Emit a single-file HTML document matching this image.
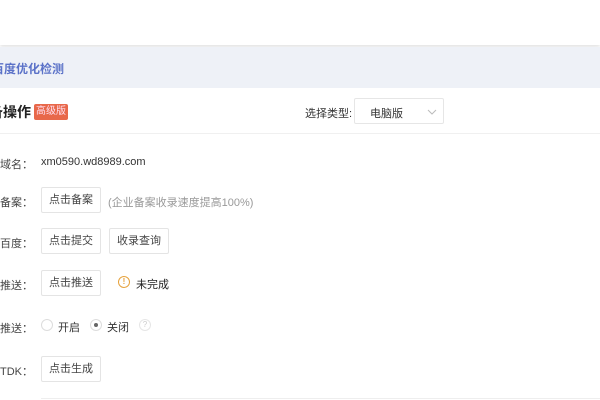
<!DOCTYPE html>
<html><head><meta charset="utf-8"><style>
body{margin:0;width:600px;height:400px;overflow:hidden;background:#fff;font-family:"Liberation Sans","Noto Sans CJK SC",sans-serif;font-size:11px;color:#333;position:relative}
.a{position:absolute;white-space:nowrap}
.top{position:absolute;left:0;top:0;width:600px;height:45px;background:#fff;box-shadow:0 2px 4px rgba(0,0,0,.12)}
.band{position:absolute;left:0;top:47px;width:600px;height:41px;background:#eef1f7}
.lbl{position:absolute;right:567px;text-align:right;color:#444;white-space:nowrap}
.btn{position:absolute;height:26px;width:60px;border:1px solid #e4e4e4;border-radius:2px;box-sizing:border-box;text-align:center;line-height:24px;color:#444;background:#fff}
</style></head><body>
<div class="top"></div>
<div class="band"></div>
<div class="a" style="left:-8px;top:60px;font-size:12px;font-weight:bold;color:#5b72c8">百度优化检测</div>
<div class="a" style="left:-25px;top:102px;font-size:14px;font-weight:bold;color:#222">准备操作</div>
<div class="a" style="left:34px;top:104px;width:34px;height:16px;background:#e8684a;color:#fde;font-size:10px;line-height:16px;text-align:center;border-radius:2px">高级版</div>
<div class="a" style="left:305px;top:105px;color:#333">选择类型:</div>
<div class="a" style="left:354px;top:98px;width:90px;height:26px;border:1px solid #e6e6e6;box-sizing:border-box;border-radius:2px"><span style="position:absolute;left:15px;top:6px">电脑版</span><svg style="position:absolute;left:72px;top:10px" width="10" height="6"><path d="M1 1L5 5L9 1" stroke="#bbb" fill="none"/></svg></div>
<div class="a" style="left:0;top:133px;width:600px;height:1px;background:#f0f0f0"></div>
<div class="lbl" style="top:156px">绑定域名：</div>
<div class="a" style="left:41px;top:156px;color:#333">xm0590.wd8989.com</div>
<div class="lbl" style="top:194px">网站备案：</div>
<div class="btn" style="left:41px;top:187px">点击备案</div>
<div class="a" style="left:108px;top:194px;color:#999">(企业备案收录速度提高100%)</div>
<div class="lbl" style="top:235px">提交百度：</div>
<div class="btn" style="left:41px;top:228px">点击提交</div>
<div class="btn" style="left:109px;top:228px">收录查询</div>
<div class="lbl" style="top:277px">主动推送：</div>
<div class="btn" style="left:41px;top:270px">点击推送</div>
<div class="a" style="left:118px;top:276px;width:10px;height:10px;border:1px solid #e6a23c;border-radius:50%;color:#e6a23c;font-size:8px;line-height:10px;text-align:center;font-weight:bold">!</div>
<div class="a" style="left:136px;top:276px;color:#222">未完成</div>
<div class="lbl" style="top:320px">定时推送：</div>
<div class="a" style="left:41px;top:319px;width:10px;height:10px;border:1px solid #ddd;border-radius:50%"></div>
<div class="a" style="left:58px;top:319px">开启</div>
<div class="a" style="left:90px;top:319px;width:10px;height:10px;border:1px solid #ddd;border-radius:50%"><div style="position:absolute;left:3px;top:3px;width:4px;height:4px;border-radius:50%;background:#666"></div></div>
<div class="a" style="left:107px;top:319px">关闭</div>
<div class="a" style="left:139px;top:319px;width:10px;height:10px;border:1px solid #e6e6e6;border-radius:50%;color:#ccc;font-size:8px;line-height:10px;text-align:center">?</div>
<div class="lbl" style="top:363px">生成TDK：</div>
<div class="btn" style="left:41px;top:356px">点击生成</div>
<div class="a" style="left:41px;top:398px;width:560px;height:1px;background:#eee"></div>
</body></html>
